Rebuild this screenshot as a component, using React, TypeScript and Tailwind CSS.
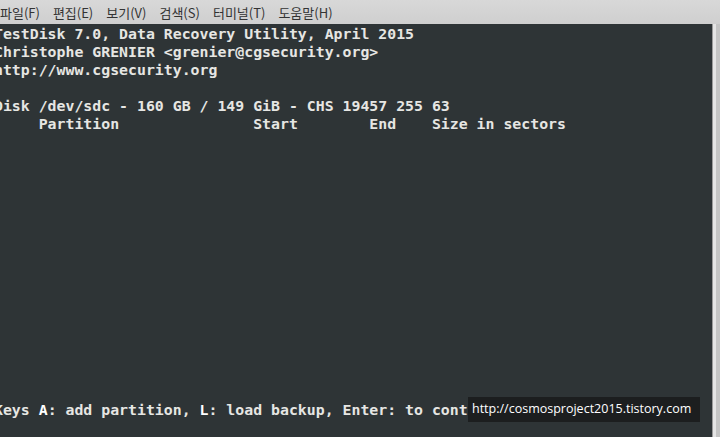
import React from "react";

const lines: React.ReactNode[] = [
  "TestDisk 7.0, Data Recovery Utility, April 2015",
  "Christophe GRENIER <grenier@cgsecurity.org>",
  "http://www.cgsecurity.org",
  "",
  "Disk /dev/sdc - 160 GB / 149 GiB - CHS 19457 255 63",
  "     Partition               Start        End    Size in sectors",
];

const menu = ["파일(F)", "편집(E)", "보기(V)", "검색(S)", "터미널(T)", "도움말(H)"];

export default function App() {
  const blank = Array.from({ length: 15 }, () => "");
  return (
    <div className="w-[720px] h-[437px] overflow-hidden flex flex-col bg-[#2e3436]">
      <div
        className="h-[24px] shrink-0 flex items-center gap-[13px] bg-gradient-to-b from-[#d8d8d8] to-[#cfcfcf] text-[13px] text-[#333333] pl-0"
        style={{ fontFamily: '"Noto Sans CJK KR", "Noto Sans", sans-serif' }}
      >
        {menu.map((m) => (
          <span key={m} className="leading-none">
            {m}
          </span>
        ))}
      </div>
      <div className="flex-1 flex min-h-0 relative">
        <div className="flex-1 overflow-hidden pt-[1px]">
          <div
            className="-ml-[6px] text-[14.85px] leading-[18px] font-bold text-[#e6e6e3] whitespace-pre"
            style={{ fontFamily: '"DejaVu Sans Mono", monospace' }}
          >
            {lines.map((l, i) => (
              <div key={i} className="h-[18px]">
                {l}
              </div>
            ))}
            {blank.map((_, i) => (
              <div key={"b" + i} className="h-[18px]"></div>
            ))}
            <div className="h-[18px] -mt-[2px]">
              Keys <span className="text-white">A</span>: add partition,{" "}
              <span className="text-white">L</span>: load backup, Enter: to continue
            </div>
          </div>
        </div>
        <div className="w-[8px] shrink-0 flex border-l border-[#9a9a9a] bg-[#cdcdcd]">
          <div className="w-[3px] bg-[#e4e4e4]"></div>
          <div className="flex-1 bg-[#c4c4c4]"></div>
        </div>
        <div
          className="absolute left-[468px] top-[373px] w-[232px] h-[25px] bg-[#1c1e1f] text-white text-[12.5px] flex items-center pl-[4px]"
          style={{ fontFamily: '"Open Sans", "Noto Sans", sans-serif' }}
        >
          http://cosmosproject2015.tistory.com
        </div>
      </div>
    </div>
  );
}
